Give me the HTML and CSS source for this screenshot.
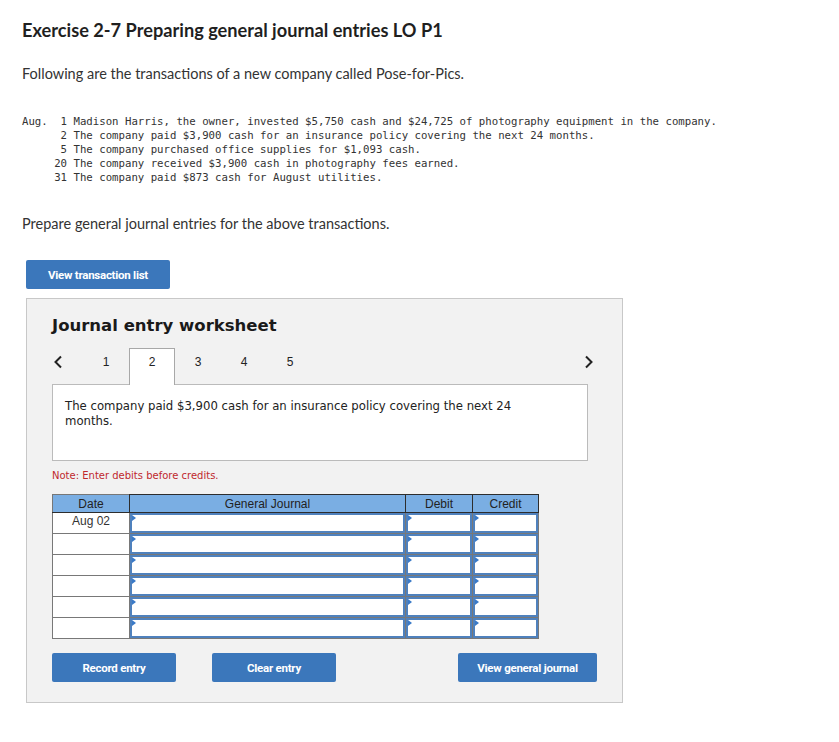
FILE: index.html
```html
<!DOCTYPE html>
<html>
<head>
<meta charset="utf-8">
<title>Exercise 2-7</title>
<link rel="stylesheet" href="styles.css">
</head>
<body>
<div class="page">
  <h1 class="title">Exercise 2-7 Preparing general journal entries LO P1</h1>
  <p class="intro">Following are the transactions of a new company called Pose-for-Pics.</p>
<pre class="trans">Aug.  1 Madison Harris, the owner, invested $5,750 cash and $24,725 of photography equipment in the company.
      2 The company paid $3,900 cash for an insurance policy covering the next 24 months.
      5 The company purchased office supplies for $1,093 cash.
     20 The company received $3,900 cash in photography fees earned.
     31 The company paid $873 cash for August utilities.</pre>
  <p class="prompt">Prepare general journal entries for the above transactions.</p>
  <button class="btn btn-list">View transaction list</button>

  <div class="panel">
    <h2 class="ws-title">Journal entry worksheet</h2>
    <div class="tabs">
      <span class="chev chev-left"><svg width="10" height="14" viewBox="0 0 10 14"><path d="M8 1.5 L2.5 7 L8 12.5" fill="none" stroke="#222" stroke-width="2"/></svg></span>
      <span class="tab">1</span>
      <span class="tab active">2</span>
      <span class="tab">3</span>
      <span class="tab">4</span>
      <span class="tab">5</span>
      <span class="spacer"></span>
      <span class="chev chev-right"><svg width="10" height="14" viewBox="0 0 10 14"><path d="M2 1.5 L7.5 7 L2 12.5" fill="none" stroke="#222" stroke-width="2"/></svg></span>
    </div>
    <div class="desc">The company paid $3,900 cash for an insurance policy covering the next 24 months.</div>
    <p class="note">Note: Enter debits before credits.</p>

    <table class="journal">
      <thead>
        <tr><th class="c-date">Date</th><th class="c-gj">General Journal</th><th class="c-dr">Debit</th><th class="c-cr">Credit</th></tr>
      </thead>
      <tbody>
        <tr><td class="date">Aug 02</td><td><div class="inp"></div></td><td><div class="inp"></div></td><td><div class="inp"></div></td></tr>
        <tr><td class="date"></td><td><div class="inp"></div></td><td><div class="inp"></div></td><td><div class="inp"></div></td></tr>
        <tr><td class="date"></td><td><div class="inp"></div></td><td><div class="inp"></div></td><td><div class="inp"></div></td></tr>
        <tr><td class="date"></td><td><div class="inp"></div></td><td><div class="inp"></div></td><td><div class="inp"></div></td></tr>
        <tr><td class="date"></td><td><div class="inp"></div></td><td><div class="inp"></div></td><td><div class="inp"></div></td></tr>
        <tr><td class="date"></td><td><div class="inp"></div></td><td><div class="inp"></div></td><td><div class="inp"></div></td></tr>
      </tbody>
    </table>

    <div class="actions">
      <button class="btn btn-act">Record entry</button>
      <button class="btn btn-act">Clear entry</button>
      <span class="spacer"></span>
      <button class="btn btn-view">View general journal</button>
    </div>
  </div>
</div>
</body>
</html>
```

FILE: styles.css
```css
* { box-sizing: border-box; }
html, body { margin: 0; padding: 0; background: #fff; }
body { font-family: "Lato", "Open Sans", sans-serif; color: #333; }

.page { padding: 19px 0 0 22px; width: 839px; }

.title {
  margin: 0;
  font-family: "Lato", sans-serif;
  font-weight: 700;
  font-size: 18.2px;
  line-height: 22px;
  color: #1f1f1f;
}

.intro {
  margin: 24px 0 0 0;
  font-size: 14.5px;
  line-height: 18px;
  color: #333;
}

.trans {
  margin: 32px 0 0 0;
  font-family: "DejaVu Sans Mono", "Liberation Mono", monospace;
  font-size: 10.7px;
  line-height: 14px;
  color: #333;
}

.prompt {
  margin: 30px 0 0 0;
  font-size: 14.5px;
  line-height: 18px;
  color: #333;
}

.btn {
  display: inline-flex;
  align-items: center;
  justify-content: center;
  border: none;
  border-radius: 2px;
  background: #3b77bb;
  color: #fff;
  font-family: "Roboto", "Liberation Sans", sans-serif;
  font-weight: 700;
  font-size: 11.5px;
  letter-spacing: -0.25px;
  height: 29px;
  padding: 0;
  cursor: pointer;
}

.btn-list { margin: 27px 0 0 4px; width: 144px; }

.panel {
  margin: 9px 0 0 4px;
  width: 597px;
  height: 405px;
  background: #f2f2f2;
  border: 1px solid #c8c8c8;
  padding: 17px 25px 0 25px;
  display: flex;
  flex-direction: column;
}

.ws-title {
  margin: 0;
  font-family: "DejaVu Sans", "Verdana", sans-serif;
  font-weight: 700;
  font-size: 16.5px;
  line-height: 20px;
  color: #1a1a1a;
}

.tabs {
  margin-top: 12px;
  display: flex;
  align-items: stretch;
  width: 542px;
  height: 37px;
  position: relative;
  z-index: 1;
  margin-bottom: -1px;
}
.chev { display: flex; align-items: flex-start; padding-top: 7px; }
.chev-left { width: 31px; padding-left: 1px; }
.chev-right { width: 10px; }
.tab {
  width: 46px;
  display: flex;
  align-items: flex-start;
  justify-content: center;
  padding-top: 6px;
  font-family: "Liberation Sans", Arial, sans-serif;
  font-size: 12px;
  line-height: 14px;
  color: #222;
  border: 1px solid transparent;
  border-bottom: none;
}
.tab.active {
  background: #fff;
  border-color: #a8a8a8;
}
.spacer { flex: 1; }

.desc {
  width: 536px;
  background: #fff;
  border: 1px solid #bbb;
  height: 77px;
  padding: 14px 60px 0 12px;
  font-family: "DejaVu Sans", Verdana, sans-serif;
  font-size: 11.7px;
  line-height: 15px;
  color: #222;
}

.note {
  margin: 8px 0 0 0;
  font-family: "DejaVu Sans", Verdana, sans-serif;
  font-size: 10px;
  line-height: 13px;
  color: #c0282d;
}

.journal {
  margin-top: 12px;
  border-collapse: collapse;
  width: 486px;
  table-layout: fixed;
  font-family: "Liberation Sans", Arial, sans-serif;
  font-size: 12px;
}
.journal th {
  background: #7aaee3;
  border: 1px solid #2d2d2d;
  font-weight: 400;
  color: #222;
  height: 18px;
  padding: 0;
  line-height: 16px;
}
.journal th.c-date { border-left-color: #777; border-top-color: #777; }
.c-date { width: 77px; }
.c-gj { width: 276px; }
.c-dr { width: 67px; }
.c-cr { width: 66px; }
.journal td {
  border: 1px solid #787878;
  padding: 0;
  height: 21px;
  background: #fff;
}
.journal td.date {
  text-align: center;
  color: #333;
  vertical-align: top;
  line-height: 17px;
}
.inp {
  position: relative;
  height: 20px;
  border: 2px solid #4f81bd;
}
.inp::before {
  content: "";
  position: absolute;
  left: 0;
  top: 0;
  width: 0;
  height: 0;
  border-top: 3px solid transparent;
  border-bottom: 3px solid transparent;
  border-left: 4px solid #3a7ac8;
}

.actions {
  margin-top: 14px;
  display: flex;
  gap: 36px;
}
.actions .spacer { flex: 1; }
.btn-act { width: 124px; }
.btn-view { width: 139px; }
```
